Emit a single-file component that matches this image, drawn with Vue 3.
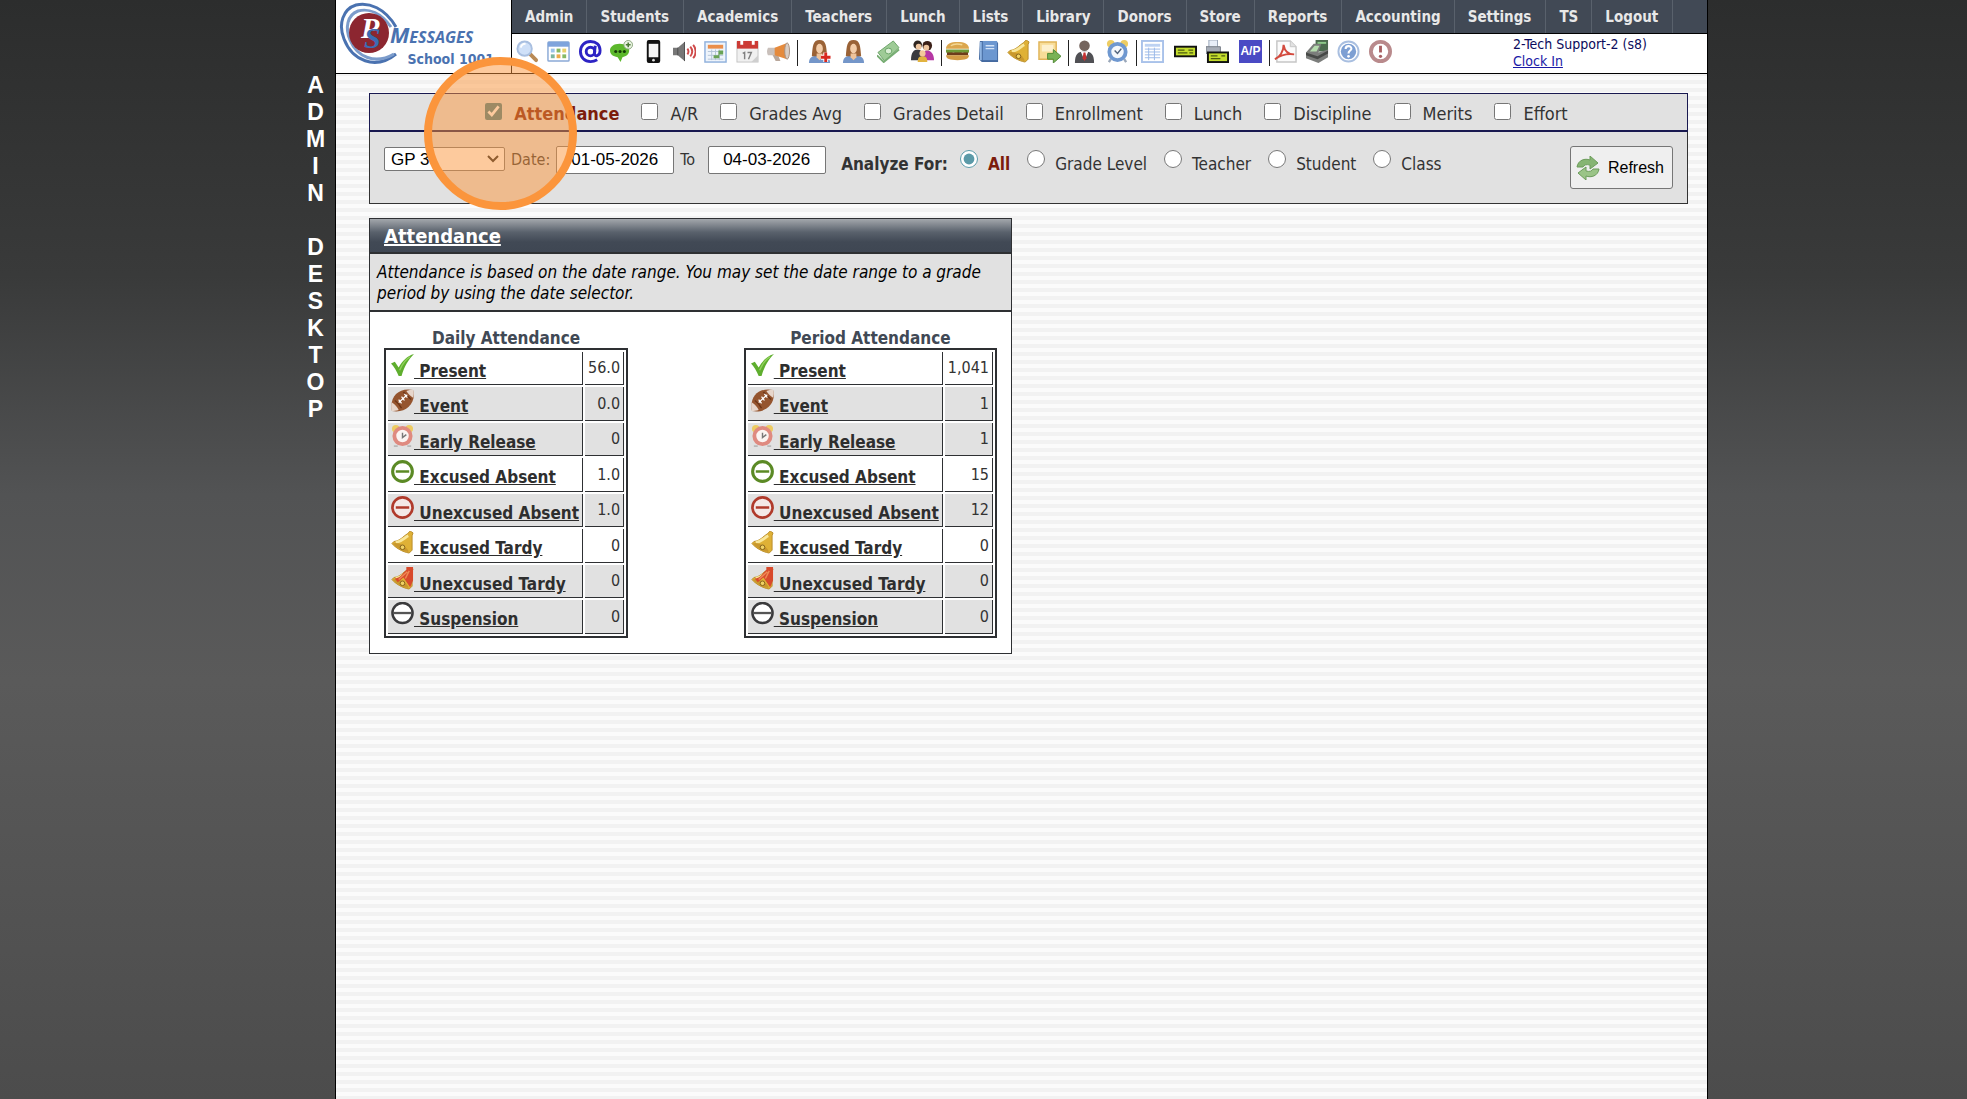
<template>
  <svg class="sprite" aria-hidden="true">
    <symbol id="i-search" viewBox="0 0 24 24">
      <path d="M14 14l7 7" stroke="#b98a55" stroke-width="4" stroke-linecap="round" />
      <circle cx="9" cy="9" r="7.5" fill="#cfe0f8" stroke="#a9bfe0" stroke-width="2" />
      <path d="M5 8a5 5 0 0 1 5-4" stroke="#fff" stroke-width="2" fill="none" />
    </symbol>
    <symbol id="i-window" viewBox="0 0 24 24">
      <rect x="1" y="2" width="22" height="20" rx="1" fill="#fff" stroke="#8aa9d6" stroke-width="1.5" />
      <rect x="1" y="2" width="22" height="5" fill="#7fa4dc" />
      <g fill="#9cc3ea"><rect x="4" y="9" width="4" height="4" /><rect x="4" y="15" width="4" height="4" fill="#7db6a0" /></g>
      <g fill="#86b964"><rect x="10" y="9" width="4" height="4" /><rect x="16" y="15" width="4" height="4" /></g>
      <g fill="#edab4a"><rect x="16" y="9" width="4" height="4" fill="#ead06b" /><rect x="10" y="15" width="4" height="4" /></g>
    </symbol>
    <symbol id="i-at" viewBox="0 0 24 24">
      <circle cx="12" cy="12" r="4.5" fill="none" stroke="#2d23c4" stroke-width="3" />
      <path d="M17 6l-1 8c0 4 6 3 6-3C22 5 18 1.500 12 1.500S1.500 6 1.500 12 6 22.500 12 22.500c3 0 5-.8 7-2" fill="none" stroke="#2d23c4" stroke-width="3" />
    </symbol>
    <symbol id="i-chat" viewBox="0 0 24 24">
      <path d="M10 4c6 0 10 3 10 7s-3 6-7 7l-2 5-3-5c-5-1-8-3-8-7s4-7 10-7z" fill="#5cb82c" />
      <g fill="#163c08"><circle cx="6" cy="12" r="1.600" /><circle cx="10.500" cy="12" r="1.600" /><circle cx="15" cy="12" r="1.600" /></g>
      <circle cx="19" cy="5" r="4.500" fill="#e9f3e2" stroke="#8aa57c" />
      <path d="M19 2.500v5M16.500 5h5" stroke="#4c7a35" stroke-width="1.600" />
    </symbol>
    <symbol id="i-phone" viewBox="0 0 24 24">
      <rect x="5" y="0" width="14" height="24" rx="2" fill="#111" />
      <rect x="7" y="4" width="10" height="14" fill="#f4f4f4" />
      <circle cx="12" cy="21" r="1.400" fill="#ddd" />
    </symbol>
    <symbol id="i-speaker" viewBox="0 0 24 24">
      <path d="M0 8h5l7-6v20l-7-6H0z" fill="#777" />
      <path d="M5 8v8M12 2v20" stroke="#4d4d4d" />
      <path d="M15 9c1.500 2 1.500 4 0 6M18 7c2.500 3 2.500 7 0 10M21 5c3.500 4 3.500 10 0 14" fill="none" stroke="#cf4b4b" stroke-width="2" />
    </symbol>
    <symbol id="i-schedule" viewBox="0 0 24 24">
      <rect x="1" y="2" width="22" height="21" fill="#eef4fb" stroke="#8fb0dc" stroke-width="1.500" />
      <rect x="4" y="5" width="16" height="4" fill="#ea8e4b" />
      <path d="M4 12h16M4 16h16M4 20h16M8 10v11M12 10v11M16 10v11" stroke="#b5c4d8" />
      <path d="M15 11h5v4h-4v4h-6v-3h5z" fill="#69a356" />
    </symbol>
    <symbol id="i-calendar" viewBox="0 0 24 24">
      <rect x="1" y="2" width="22" height="21" fill="#f0f0f0" stroke="#c4c4c4" />
      <rect x="1" y="1" width="22" height="8" fill="#cc3a34" />
      <path d="M6 0v5M18 0v5" stroke="#fff" stroke-width="3" />
      <path d="M7 14l2-1v7M12 13h4l-3 7" fill="none" stroke="#808080" stroke-width="1.500" />
      <path d="M16 23l7-7v7z" fill="#cfcfcf" />
    </symbol>
    <symbol id="i-horn" viewBox="0 0 24 24">
      <path d="M5 14h6l3 8h-5z" fill="#b9a79b" />
      <path d="M1 8h8v8H1q-2-4 0-8z" fill="#c9c0bb" />
      <path d="M8 8L21 3v17L8 16z" fill="#e58a3c" />
      <ellipse cx="21" cy="11.500" rx="2.500" ry="8.500" fill="#d9cdc4" stroke="#a78f7f" />
    </symbol>
    <symbol id="i-woman" viewBox="0 0 24 24">
      <path d="M1 24c0-6 4-8 11-8s11 2 11 8z" fill="#7496c9" />
      <path d="M4 17C5 6 5 0 12 0s7 6 8 17z" fill="#9a6236" />
      <path d="M9 14h6v4l-3 3-3-3z" fill="#eec39b" />
      <ellipse cx="12" cy="9" rx="3.500" ry="5" fill="#f3cda9" />
    </symbol>
    <symbol id="i-woman-add" viewBox="0 0 24 24">
      <use href="#i-woman" />
      <path d="M18.500 13v10M13.500 18h10" stroke="#fff" stroke-width="5" />
      <path d="M18.500 13v10M13.500 18h10" stroke="#d8281f" stroke-width="3" />
    </symbol>
    <symbol id="i-cash" viewBox="0 0 24 24">
      <path d="M1 13L17 1l6 7L8 22z" fill="#9ecb96" stroke="#6ba367" />
      <path d="M0 16l7 7 16-13" fill="none" stroke="#77ad73" stroke-width="2" />
      <ellipse cx="12" cy="11.500" rx="3.500" ry="3" fill="#d9eed4" stroke="#6ba367" />
    </symbol>
    <symbol id="i-family" viewBox="0 0 24 24">
      <circle cx="7" cy="5" r="4.500" fill="#2f251f" /><circle cx="17" cy="6" r="5" fill="#3b2018" />
      <path d="M0 21c0-8 3-11 7-11s6 4 6 11z" fill="#3a3a3f" />
      <path d="M12 21c0-8 2-10 5-10s7 3 7 10z" fill="#b637a4" />
      <circle cx="8" cy="7" r="3" fill="#f0c7a0" /><circle cx="16" cy="8" r="3" fill="#f0c7a0" />
      <path d="M7 23c0-5 2-6 5-6s5 1 5 6z" fill="#e2b33f" /><circle cx="12" cy="14" r="3.200" fill="#f3c89a" />
    </symbol>
    <symbol id="i-burger" viewBox="0 0 24 24">
      <path d="M0 9c0-5 5-7 12-7s12 2 12 7z" fill="#dba64d" />
      <path d="M0 10h24v3l-3 1-4-1-4 2-5-2-4 1-4-1z" fill="#6f9a37" />
      <path d="M1 13h22v3H1z" fill="#6e3c1b" />
      <path d="M0 16h24c0 4-4 5-12 5S0 20 0 16z" fill="#d39b45" />
      <path d="M5 6c3-2 8-2 12-1" stroke="#f3d894" stroke-width="1.500" fill="none" />
    </symbol>
    <symbol id="i-book" viewBox="0 0 24 24">
      <path d="M3 1h17l2 2v20H5l-3-3z" fill="#44699f" />
      <rect x="6" y="1" width="15" height="20" fill="#6c97d0" />
      <path d="M4 2v19" stroke="#8fb4e2" stroke-width="2" />
      <path d="M9 6h9M9 9h9" stroke="#d3e3f7" stroke-width="1.500" />
    </symbol>
    <symbol id="i-bell" viewBox="0 0 24 24">
      <path d="M20 0l3 2-1 3v15l-3 3C12 22 4 17 1 13l2-2c7-1 9-5 14-8z" fill="#dfb136" stroke="#b98d2b" />
      <path d="M5 12c7-1 9-5 13-7" stroke="#f9e79b" stroke-width="3" fill="none" />
      <path d="M2 13c4 5 10 8 16 9 2-3-10-12-16-9z" fill="#c9982d" />
      <circle cx="12" cy="17" r="2.400" fill="#f0d264" stroke="#84611b" />
    </symbol>
    <symbol id="i-bell-red" viewBox="0 0 24 24">
      <use href="#i-bell" />
      <path d="M23 0v14l-3 7-7-10-6 5-3-4c7-1 8-6 12-9V0z" fill="#d8492c" />
      <path d="M8 13l9-8M15 12l4-8" stroke="#ee8b55" stroke-width="1.500" />
    </symbol>
    <symbol id="i-note" viewBox="0 0 24 24">
      <path d="M1 2h18v18H1z" fill="#f8dd98" stroke="#e0b458" stroke-width="1.500" />
      <path d="M4 5h12v7H4z" fill="#fdf0cd" />
      <path d="M10 14h6v-4l8 7-8 7v-4h-6z" fill="#79b254" stroke="#4e8a35" />
    </symbol>
    <symbol id="i-man" viewBox="0 0 24 24">
      <circle cx="12" cy="6" r="5.500" fill="#75655e" />
      <path d="M2 24c0-9 3-12 10-12s10 3 10 12z" fill="#505054" />
      <path d="M8 12h8l-4 9z" fill="#fff" /><path d="M11 13h2l1 6-2 3-2-3z" fill="#c63232" />
    </symbol>
    <symbol id="i-clock" viewBox="0 0 24 24">
      <circle cx="5" cy="4" r="4" fill="#edcc62" /><circle cx="19" cy="4" r="4" fill="#edcc62" />
      <path d="M5 20l-2 3M19 20l2 3" stroke="#9aa7b9" stroke-width="2.500" />
      <circle cx="12" cy="12.500" r="8.500" fill="#f5f8fc" stroke="#6f98d0" stroke-width="4" />
      <path d="M9 11l3 3 4-5" fill="none" stroke="#51637b" stroke-width="1.500" />
    </symbol>
    <symbol id="i-clock-red" viewBox="0 0 24 24">
      <circle cx="5" cy="4" r="4" fill="#edcc62" /><circle cx="19" cy="4" r="4" fill="#edcc62" />
      <path d="M3 22h4M17 22h4" stroke="#b8b8b8" stroke-width="2" />
      <circle cx="12" cy="11.500" r="8.500" fill="#fbf4f2" stroke="#df8a80" stroke-width="4" />
      <path d="M12 8v5l4-3" fill="none" stroke="#777" stroke-width="1.500" />
    </symbol>
    <symbol id="i-grid" viewBox="0 0 24 24">
      <rect x="1" y="1" width="22" height="22" fill="#fff" stroke="#a9c2ea" stroke-width="2" />
      <rect x="4" y="4" width="16" height="3" fill="#bdd2f2" />
      <path d="M4 9.500h16M4 12.500h16M4 15.500h16M4 18.500h16M8 8v13M14 8v13" stroke="#9bb9e8" />
    </symbol>
    <symbol id="i-check" viewBox="0 0 24 24">
      <rect x="1" y="7" width="22" height="10" fill="#c3dc2c" stroke="#111" stroke-width="2" />
      <path d="M4 10.500h7M4 13.500h10M15 10.500h5M16 13.500h4" stroke="#4d5a10" stroke-width="1.300" />
    </symbol>
    <symbol id="i-check-print" viewBox="0 0 24 24">
      <path d="M3 0h9v8H3z" fill="#e8eef8" stroke="#9aa6b8" />
      <path d="M0 7h15v7H0z" fill="#a7adb7" stroke="#757b85" />
      <rect x="2" y="13" width="21" height="10" fill="#c3dc2c" stroke="#111" stroke-width="2" />
      <path d="M5 16.500h7M5 19.500h10M16 16.500h4" stroke="#4d5a10" stroke-width="1.300" />
    </symbol>
    <symbol id="i-pdf" viewBox="0 0 24 24">
      <path d="M3 1h14l6 6v16H3z" fill="#fbfbfb" stroke="#c6c6c6" stroke-width="1.500" />
      <path d="M17 1v6h6" fill="#e2e2e2" stroke="#c6c6c6" />
      <path d="M1 20c5-2 9-8 9-15 1 6 4 10 11 10-7-1-13 0-20 5z" fill="none" stroke="#d34a3e" stroke-width="2" />
    </symbol>
    <symbol id="i-register" viewBox="0 0 24 24">
      <path d="M10 0h13v12H10z" fill="#4b6b4e" />
      <path d="M0 13l8-9h8l-3 9 10-3v8l-10 6L0 19z" fill="#7b7d7b" />
      <path d="M4 12l5-6h5l-3 6z" fill="#b5dcae" />
      <path d="M0 13l12 4 11-6v3l-11 6L0 16z" fill="#474947" />
      <path d="M12 3h9" stroke="#8dc98a" stroke-width="2" />
    </symbol>
    <symbol id="i-help" viewBox="0 0 24 24">
      <circle cx="12" cy="12" r="10.500" fill="#fff" stroke="#a9bfe0" stroke-width="2" />
      <circle cx="12" cy="12" r="8" fill="#7d9fd3" />
      <path d="M9 9.500c0-4 6-4 6-.5 0 2-3 2-3 5" fill="none" stroke="#fff" stroke-width="2.200" /><circle cx="12" cy="17" r="1.400" fill="#fff" />
    </symbol>
    <symbol id="i-alert" viewBox="0 0 24 24">
      <circle cx="12" cy="12" r="10" fill="#fff" stroke="#b98a8c" stroke-width="4" />
      <path d="M12 6v7" stroke="#a85f62" stroke-width="3" /><circle cx="12" cy="17" r="1.700" fill="#a85f62" />
    </symbol>
    <symbol id="i-tick" viewBox="0 0 24 24">
      <path d="M0 10l4-2 4 6C12 7 17 2 24 0c-6 6-10 13-13 23H8C6 18 3 13 0 10z" fill="#5fae2e" />
      <path d="M9 17C12 10 16 5 20 3" stroke="#8fd05a" stroke-width="1.500" fill="none" />
    </symbol>
    <symbol id="i-football" viewBox="0 0 24 24">
      <path d="M1 23C-2 8 8-2 23 1c4 14-8 25-22 22z" fill="#95552f" />
      <path d="M1 23C0 19 0 16 1 14c3 2 6 5 7 8-2 1-5 1-7 1zM23 1c1 3 1 5 0 8-3-2-5-4-7-7 2-1 5-1 7-1z" fill="#e7d6cb" />
      <path d="M4 12c3 2 5 4 7 8M13 3c2 3 5 5 8 8" stroke="#6c3517" stroke-width="1.500" fill="none" />
      <path d="M8 14l9-8M8 11l3 4M11 8l3 4M14 5l3 4" stroke="#fff" stroke-width="1.300" />
    </symbol>
    <symbol id="i-minus-green" viewBox="0 0 24 24">
      <circle cx="12" cy="12" r="10.300" fill="#fff" stroke="#5b8a25" stroke-width="3.200" />
      <path d="M5 12h14" stroke="#5b8a25" stroke-width="2.600" />
    </symbol>
    <symbol id="i-minus-red" viewBox="0 0 24 24">
      <circle cx="12" cy="12" r="10.500" fill="#f4e9e7" stroke="#b03a2b" stroke-width="2.800" />
      <path d="M5 12h14" stroke="#b03a2b" stroke-width="2.600" />
    </symbol>
    <symbol id="i-minus-dark" viewBox="0 0 24 24">
      <circle cx="12" cy="11.500" r="10.500" fill="#fff" stroke="#3a3a3c" stroke-width="2.600" />
      <path d="M2 11.500h20" stroke="#555" stroke-width="2.400" />
    </symbol>
    <symbol id="i-refresh" viewBox="0 0 24 24">
      <path d="M1 11C2 4 9 2 14 4V0l8 7-8 6V9c-4-1-6 0-7 2z" fill="#86b573" stroke="#6c9c5b" />
      <path d="M23 13c-1 7-8 9-13 7v4l-8-7 8-6v4c4 1 6 0 7-2z" fill="#9ac487" stroke="#6c9c5b" />
    </symbol>
  </svg>

  <div class="page">
    <aside class="side">
      <div class="side-title">
        <span v-for="(letter, i) in sideLetters" :key="i">{{ letter }}</span>
      </div>
    </aside>

    <main class="desktop">
      <header class="header">
        <a class="logo" href="#">
          <svg class="logo-mark" viewBox="0 0 140 66" role="img" aria-label="PS Messages">
            <path d="M57 25C46 6 30 0 17 3 4 7-1 22 5 37c8 21 31 32 52 15" fill="none" stroke="#4a72b0" stroke-width="3" />
            <path d="M52 25C42 11 30 6 19 9 8 13 6 26 11 38c7 17 25 25 44 14" fill="none" stroke="#7c9ccb" stroke-width="3" />
            <circle cx="30" cy="31" r="20" fill="#8c2630" />
            <text x="22" y="36" class="mark-p">P</text>
            <text x="25" y="46" class="mark-s">S</text>
            <text x="51" y="41" class="mark-word"><tspan class="mark-big">M</tspan>ESSAGES</text>
          </svg>
          <span class="school">School 1001</span>
        </a>
        <div class="header-main">
          <nav class="menu">
            <a v-for="item in menu" :key="item" href="#" class="menu-item">{{ item }}</a>
          </nav>
          <div class="toolbar">
            <div v-for="(group, i) in tools" :key="i" class="tool-group" :style="{ width: group.width + 'px' }">
              <a v-for="icon in group.icons" :key="icon" href="#" class="tool" :aria-label="icon">
                <span v-if="icon === 'ap'" class="tool-text">A/P</span>
                <svg v-else><use :href="'#i-' + icon" /></svg>
              </a>
            </div>
            <div class="user">
              <span>2-Tech Support-2 (s8)</span>
              <a href="#">Clock In</a>
            </div>
          </div>
        </div>
      </header>

      <form class="filters" @submit.prevent>
        <div class="filter-tabs">
          <label v-for="tab in tabs" :key="tab" class="tab" :class="{ active: selected.includes(tab) }">
            <input v-model="selected" type="checkbox" :value="tab" />
            <span>{{ tab }}</span>
          </label>
        </div>
        <div class="filter-row">
          <div class="period-box">
            <select v-model="period" class="period" aria-label="Grade period">
              <option>GP 3</option>
              <option>GP 4</option>
            </select>
            <svg class="chevron" viewBox="0 0 12 8">
              <path d="M1 1l5 5 5-5" fill="none" stroke="#222" stroke-width="2" />
            </svg>
          </div>
          <label for="date-from" class="date-label">Date:</label>
          <input id="date-from" v-model="dateFrom" class="date" type="text" />
          <label for="date-to" class="to-label">To</label>
          <input id="date-to" v-model="dateTo" class="date" type="text" />
          <div class="analyze" role="radiogroup" aria-labelledby="analyze-label">
            <b id="analyze-label">Analyze For:</b>
            <label v-for="mode in modes" :key="mode" class="mode" :class="{ active: analyze === mode }">
              <input v-model="analyze" type="radio" name="analyze" :value="mode" />
              <span>{{ mode }}</span>
            </label>
          </div>
          <button type="submit" class="refresh">
            <svg><use href="#i-refresh" /></svg>
            Refresh
          </button>
        </div>
      </form>

      <section class="card">
        <h2 class="card-title"><a href="#">Attendance</a></h2>
        <p class="card-note">
          Attendance is based on the date range. You may set the date range to a grade period by using the date selector.
        </p>
        <div class="card-body">
          <table v-for="table in tables" :key="table.title" class="stats">
            <caption>{{ table.title }}</caption>
            <tbody>
              <tr v-for="(row, i) in rows" :key="row.label" :class="{ shaded: row.shaded }">
                <th scope="row">
                  <a href="#"><svg><use :href="'#i-' + row.icon" /></svg>&nbsp;{{ row.label }}</a>
                </th>
                <td>{{ table.values[i] }}</td>
              </tr>
            </tbody>
          </table>
        </div>
      </section>
    </main>

    <div class="click-marker"></div>
  </div>
</template>

<script setup>
import { ref } from 'vue'

const sideLetters = 'ADMIN DESKTOP'.split('')

const menu = [
  'Admin', 'Students', 'Academics', 'Teachers', 'Lunch', 'Lists', 'Library',
  'Donors', 'Store', 'Reports', 'Accounting', 'Settings', 'TS', 'Logout'
]

// each group ends with a divider, the last one does not
const tools = [
  { width: 286, icons: ['search', 'window', 'at', 'chat', 'phone', 'speaker', 'schedule', 'calendar', 'horn'] },
  { width: 144, icons: ['woman-add', 'woman', 'cash', 'family'] },
  { width: 127, icons: ['burger', 'book', 'bell', 'note'] },
  { width: 68, icons: ['man', 'clock'] },
  { width: 133, icons: ['grid', 'check', 'check-print', 'ap'] },
  { width: 129, icons: ['pdf', 'register', 'help', 'alert'] }
]

const tabs = ['Attendance', 'A/R', 'Grades Avg', 'Grades Detail', 'Enrollment', 'Lunch', 'Discipline', 'Merits', 'Effort']
const selected = ref(['Attendance'])

const period = ref('GP 3')
const dateFrom = ref('01-05-2026')
const dateTo = ref('04-03-2026')

const modes = ['All', 'Grade Level', 'Teacher', 'Student', 'Class']
const analyze = ref('All')

const rows = [
  { label: 'Present', icon: 'tick', shaded: false },
  { label: 'Event', icon: 'football', shaded: true },
  { label: 'Early Release', icon: 'clock-red', shaded: true },
  { label: 'Excused Absent', icon: 'minus-green', shaded: false },
  { label: 'Unexcused Absent', icon: 'minus-red', shaded: true },
  { label: 'Excused Tardy', icon: 'bell', shaded: false },
  { label: 'Unexcused Tardy', icon: 'bell-red', shaded: true },
  { label: 'Suspension', icon: 'minus-dark', shaded: true }
]

const tables = [
  { title: 'Daily Attendance', values: ['56.0', '0.0', '0', '1.0', '1.0', '0', '0', '0'] },
  { title: 'Period Attendance', values: ['1,041', '1', '1', '15', '12', '0', '0', '0'] }
]
</script>

<style>
body {
  background: #4c4c4c;
}
</style>

<style scoped>
.sprite {
  position: absolute;
  width: 0;
  height: 0;
}

.page {
  position: relative;
  display: grid;
  grid-template-columns: 335px 1fr 259px;
  min-height: 100vh;
  background: linear-gradient(#2c2d2d, #393a3a 25%, #525354 45%, #5a5a5a 62%, #4c4c4c);
  font-family: 'DejaVu Sans Condensed', Tahoma, sans-serif;
  font-size: 17px;
  color: #333;
}

.side {
  display: flex;
  justify-content: flex-end;
  padding-top: 72px;
}

.side-title {
  display: flex;
  flex-direction: column;
  width: 39px;
  text-align: center;
  font: bold 23px/27px 'Liberation Sans', Arial, sans-serif;
  color: #fff;
}

.side-title span {
  height: 27px;
}

.desktop {
  border: 1px solid #000;
  border-width: 0 1px;
  background: repeating-linear-gradient(#f2f2f2 0 4px, #fbfbfb 4px 8px);
}

.header {
  display: flex;
  height: 73px;
  background: #fff;
  border-bottom: 1px solid #000;
}

.logo {
  position: relative;
  width: 175px;
  border-right: 1px solid #000;
  text-decoration: none;
}

.logo-mark {
  display: block;
  width: 140px;
  height: 66px;
  margin: 2px 0 0 3px;
}

.mark-p {
  font: bold italic 30px 'Liberation Serif', serif;
  fill: #fff;
}

.mark-s {
  font: bold italic 30px 'Liberation Serif', serif;
  fill: #3c6cb4;
}

.mark-word {
  font: italic bold 16px 'Open Sans', sans-serif;
  fill: #4a72b0;
}

.mark-big {
  font-size: 22px;
}

.school {
  position: absolute;
  right: 17px;
  top: 50px;
  font-size: 14px;
  line-height: 18px;
  font-weight: bold;
  color: #4a72b0;
}

.header-main {
  flex: 1;
}

.menu {
  display: flex;
  height: 33px;
  background: #414955;
  border-bottom: 1px solid #000;
}

.menu-item {
  height: 33px;
  padding: 0 13px;
  border-right: 1px solid #59616c;
  font-size: 15px;
  line-height: 35px;
  font-weight: bold;
  color: #e8e8e8;
  text-decoration: none;
}

.menu-item:nth-child(even) {
  padding-right: 14px;
}

.toolbar {
  display: flex;
  align-items: center;
  height: 38px;
}

.tool-group {
  box-sizing: border-box;
  display: flex;
  justify-content: space-between;
  height: 26px;
  padding: 0 7px 0 4px;
  border-right: 1px solid #222;
}

.tool-group:nth-child(2) {
  padding-left: 10px;
}

.tool-group:nth-child(6) {
  border-right: 0;
}

.tool,
.tool svg {
  display: block;
  width: 23px;
  height: 23px;
}

.tool {
  text-decoration: none;
}

.tool-text {
  display: block;
  background: #4a4ac4;
  font: bold 12px/23px 'Liberation Sans', Arial, sans-serif;
  text-align: center;
  color: #fff;
}

.user {
  display: flex;
  flex-direction: column;
  margin-left: 114px;
  font-size: 14px;
  line-height: 17px;
  color: #0b0b5c;
}

.user a {
  color: #1a1aa6;
}

.filters {
  margin: 19px 19px 0 33px;
  background: #e1e1e1;
  border: 1px solid #333;
}

.filter-tabs {
  display: flex;
  justify-content: center;
  gap: 22px;
  height: 36px;
  margin: -1px -1px 0;
  padding-right: 4px;
  border: 1px solid #191950;
  border-bottom-width: 2px;
}

.tab {
  display: flex;
  gap: 12px;
  font-size: 18px;
  line-height: 40px;
}

.tab input {
  width: 17px;
  height: 17px;
  margin: 9px 0 0;
  accent-color: #3f7f8c;
}

.tab.active,
.mode.active {
  font-weight: bold;
  color: #7c1c0c;
}

.filter-row {
  display: flex;
  align-items: flex-start;
  height: 57px;
  padding: 14px 14px 0;
}

.period,
.date {
  box-sizing: border-box;
  border: 1px solid #767676;
  border-radius: 2px;
  background: #fff;
  color: #000;
  font: 17px 'Liberation Sans', Arial, sans-serif;
}

.period-box {
  position: relative;
  margin-top: 1px;
}

.period {
  display: block;
  width: 121px;
  height: 24px;
  padding: 0 6px;
  appearance: none;
}

.chevron {
  position: absolute;
  right: 6px;
  top: 8px;
  width: 12px;
  height: 8px;
  pointer-events: none;
}

.date {
  width: 118px;
  height: 28px;
  padding: 0 0 0 14px;
}

.date-label,
.to-label {
  margin: 0 6px;
  font-size: 16px;
  line-height: 27px;
}

.to-label {
  margin-right: 13px;
}

.analyze {
  display: flex;
  gap: 17px;
  margin-left: 15px;
  line-height: 36px;
}

.analyze b {
  margin-right: -5px;
}

.mode {
  display: flex;
  gap: 10px;
}

.mode input {
  width: 18px;
  height: 18px;
  margin: 4px 0 0;
  accent-color: #5b9aa8;
}

.refresh {
  display: flex;
  align-items: center;
  gap: 8px;
  height: 43px;
  margin-left: auto;
  padding: 0 8px 0 5px;
  border: 1px solid #767676;
  border-radius: 3px;
  background: #efefef;
  color: #000;
  font: 16px 'Liberation Sans', Arial, sans-serif;
}

.refresh svg {
  width: 24px;
  height: 24px;
}

.card {
  box-sizing: border-box;
  width: 643px;
  margin: 14px 0 0 33px;
  border: 1px solid #2e3033;
  background: #fff;
}

.card-title {
  height: 33px;
  margin: 0;
  padding-left: 14px;
  border-bottom: 2px solid #2e3033;
  background: linear-gradient(#a3a7ac, #59616c 40%, #414955 70%, #3f4753);
  font-size: 20px;
  line-height: 35px;
}

.card-title a {
  color: #fff;
}

.card-note {
  margin: 0;
  padding: 8px 7px 6px;
  border-bottom: 2px solid #2e3033;
  background: #e1e1e1;
  line-height: 21px;
  font-style: italic;
  color: #000;
}

.card-body {
  display: flex;
  justify-content: space-between;
  padding: 16px 14px 15px;
}

.stats {
  border: 2px solid #2e3033;
  border-spacing: 2px;
}

.stats caption {
  font-weight: bold;
  line-height: 20px;
  color: #414955;
}

.stats th,
.stats td {
  box-sizing: border-box;
  height: 33px;
  padding: 0 3px;
  border: 1px solid #2e3033;
  border-width: 0 1px 1px 0;
  background: #fff;
  line-height: 26px;
}

.stats tr:nth-child(even) th,
.stats tr:nth-child(even) td {
  height: 34px;
}

.stats .shaded th,
.stats .shaded td {
  background: #e1e1e1;
}

.stats th {
  text-align: left;
  vertical-align: top;
}

.stats th a {
  display: block;
  color: #2e2e2e;
}

.stats th svg {
  width: 23px;
  height: 23px;
  margin-top: 2px;
  vertical-align: 0;
}

.stats td {
  font-size: 16px;
  text-align: right;
}

.click-marker {
  position: absolute;
  left: 424px;
  top: 57px;
  box-sizing: border-box;
  width: 153px;
  height: 153px;
  border: 8px solid #fb953c;
  border-radius: 50%;
  background: rgba(251, 149, 60, 0.5);
  pointer-events: none;
}
</style>
